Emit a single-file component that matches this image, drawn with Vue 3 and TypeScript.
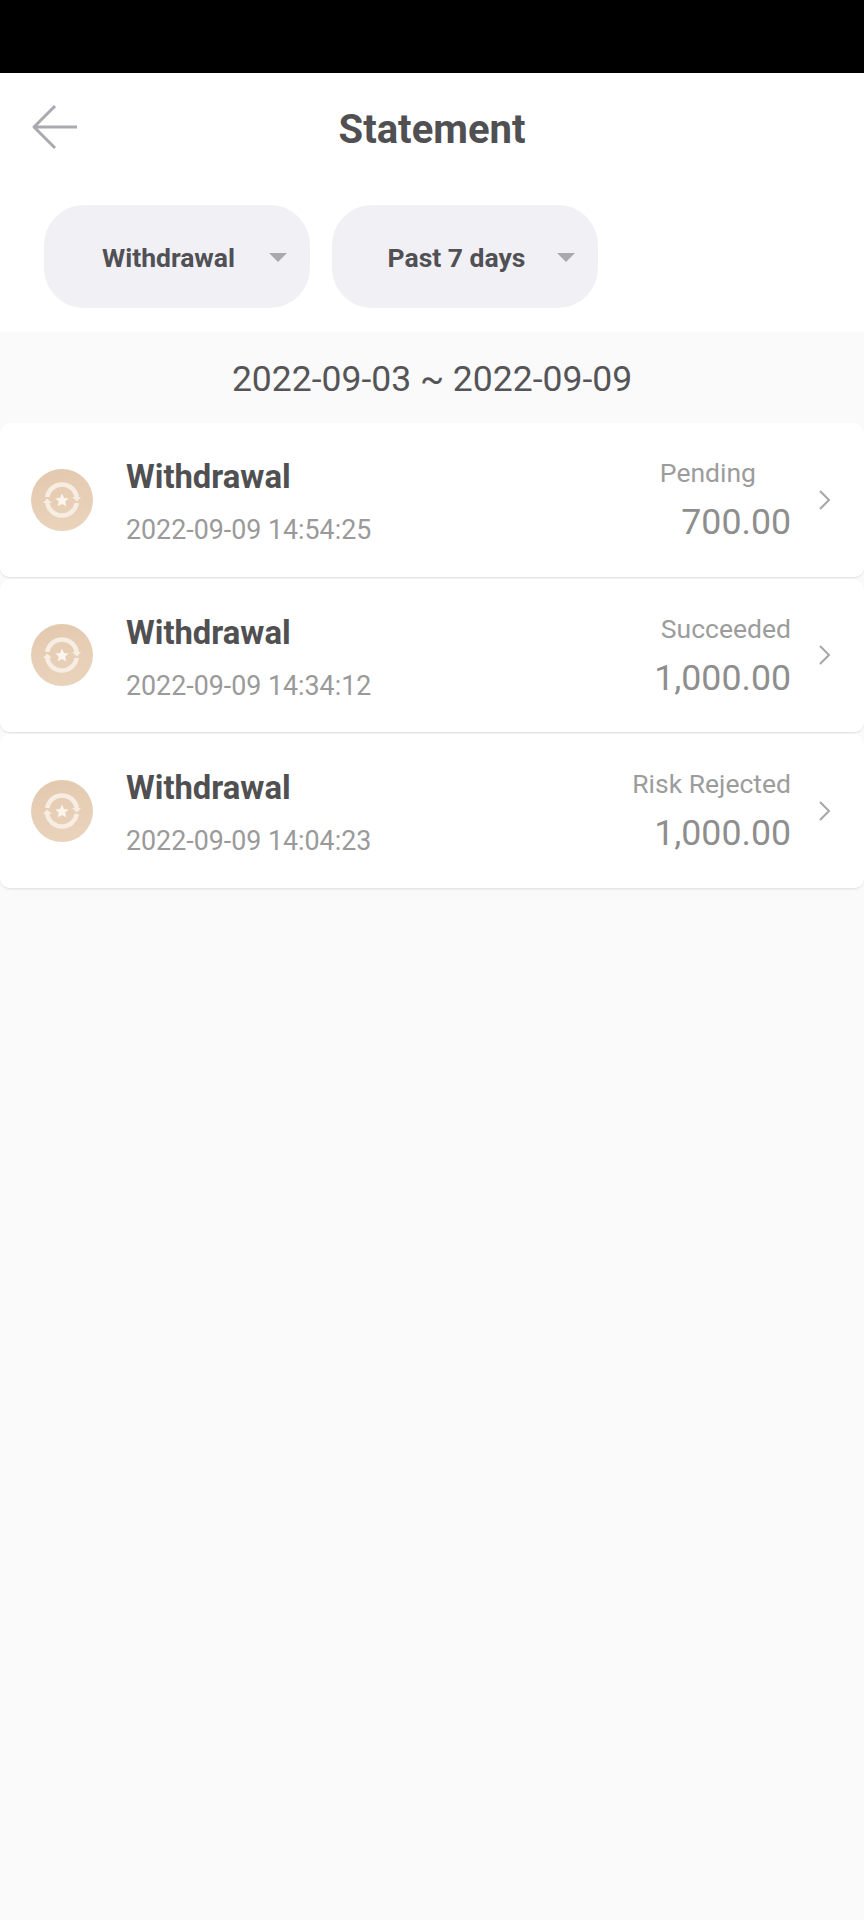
<template>
  <div class="page">
    <div class="status-bar"></div>

    <header class="top">
      <div class="title-row">
        <svg class="back" width="48" height="48" viewBox="0 0 48 48" fill="none">
          <path d="M24 3 L3 24 L24 45 M3 24 H46" stroke="#a9a9b0" stroke-width="3" stroke-linejoin="round" />
        </svg>
        <h1 class="title">Statement</h1>
      </div>
      <div class="filters">
        <div v-for="f in filters" :key="f" class="pill">
          <span class="pill-text">{{ f }}</span>
          <span class="caret"></span>
        </div>
      </div>
    </header>

    <div class="range">2022-09-03 ~ 2022-09-09</div>

    <div class="list">
      <div v-for="(row, i) in rows" :key="i" class="card">
        <svg class="coin" width="62" height="62" viewBox="0 0 62 62">
          <defs>
            <linearGradient :id="'coin' + i" x1="0.3" y1="0" x2="0.5" y2="1">
              <stop offset="0" stop-color="#e3c9ae" />
              <stop offset="1" stop-color="#ead3bc" />
            </linearGradient>
          </defs>
          <circle cx="31" cy="31" r="31" :fill="'url(#coin' + i + ')'" />
          <path d="M16.2 28 A15 15 0 0 1 45.8 28" fill="none" stroke="#f7ede2" stroke-width="4.5" />
          <path d="M45.8 34 A15 15 0 0 1 16.2 34" fill="none" stroke="#f7ede2" stroke-width="4.5" />
          <path d="M41 28 L50 28 L46 32.5 Z" fill="#f7ede2" />
          <path d="M21 34 L12 34 L16 29.5 Z" fill="#f7ede2" />
          <path d="M31 24.5 L33 28.9 L37.7 29.4 L34.3 32.6 L35.2 37.3 L31 35 L26.8 37.3 L27.7 32.6 L24.3 29.4 L29 28.9 Z" fill="#fbf5ee" />
        </svg>
        <div class="info">
          <div class="name">{{ row.name }}</div>
          <div class="time">{{ row.time }}</div>
        </div>
        <div class="right">
          <div class="status" :class="{ 'is-pending': row.status === 'Pending' }">{{ row.status }}</div>
          <div class="amount">{{ row.amount }}</div>
        </div>
        <svg class="chevron" width="14" height="22" viewBox="0 0 14 22" fill="none">
          <path d="M2 2 L11 11 L2 20" stroke="#a6a6a6" stroke-width="2" />
        </svg>
      </div>
    </div>
  </div>
</template>

<script setup lang="ts">
const filters: string[] = ['Withdrawal', 'Past 7 days']

const rows = [
  { name: 'Withdrawal', time: '2022-09-09 14:54:25', status: 'Pending', amount: '700.00' },
  { name: 'Withdrawal', time: '2022-09-09 14:34:12', status: 'Succeeded', amount: '1,000.00' },
  { name: 'Withdrawal', time: '2022-09-09 14:04:23', status: 'Risk Rejected', amount: '1,000.00' },
]
</script>

<style scoped>
.page {
  width: 864px;
  height: 1920px;
  background: #fafafa;
  font-family: Roboto, "Liberation Sans", sans-serif;
  overflow: hidden;
}

.status-bar {
  height: 73px;
  background: #000;
}

.top {
  background: #fff;
  height: 259px;
  box-sizing: border-box;
}

.title-row {
  position: relative;
  height: 112px;
  display: flex;
  align-items: center;
  justify-content: center;
}

.back {
  position: absolute;
  left: 31px;
  top: 30px;
}

.title {
  margin: 0;
  font-size: 40px;
  font-weight: 700;
  color: #505053;
  line-height: 1;
  padding-top: 1px;
}

.filters {
  display: flex;
  gap: 22px;
  padding: 20px 0 0 44px;
}

.pill {
  width: 266px;
  height: 103px;
  border-radius: 40px;
  background: #f1f1f5;
  display: flex;
  align-items: center;
  justify-content: center;
  box-sizing: border-box;
  padding: 2px 17px 0 0;
  position: relative;
}

.pill-text {
  font-size: 26.5px;
  font-weight: 700;
  color: #505055;
}

.caret {
  position: absolute;
  right: 23px;
  top: 48px;
  border-left: 9px solid transparent;
  border-right: 9px solid transparent;
  border-top: 9px solid #a9a9b0;
}

.range {
  height: 91px;
  box-sizing: border-box;
  padding-top: 2px;
  display: flex;
  align-items: center;
  justify-content: center;
  font-size: 35.5px;
  color: #555558;
}

.list {
  display: flex;
  flex-direction: column;
  gap: 1px;
}

.card {
  height: 153.6px;
  background: #fff;
  border-radius: 10px;
  border-bottom: 1px solid #e6e6e6;
  box-shadow: 0 1px 2px rgba(0, 0, 0, 0.05);
  display: flex;
  align-items: center;
  padding: 0 32px 0 31px;
}

.coin {
  flex: none;
  filter: blur(0.6px);
}

.info {
  margin-left: 33px;
  padding-top: 5px;
  flex: 1;
}

.name {
  font-size: 32.8px;
  font-weight: 700;
  color: #505052;
  line-height: 38px;
}

.time {
  margin-top: 18px;
  font-size: 26.8px;
  color: #9a9a9a;
  line-height: 32px;
}

.right {
  text-align: right;
}

.status {
  font-size: 26.5px;
  color: #9c9c9c;
  line-height: 32px;
}

.status.is-pending {
  margin-right: 35px;
}

.amount {
  margin-top: 13px;
  font-size: 35.7px;
  color: #8e8e8e;
  line-height: 40px;
}

.chevron {
  margin-left: 27px;
  flex: none;
}
</style>
